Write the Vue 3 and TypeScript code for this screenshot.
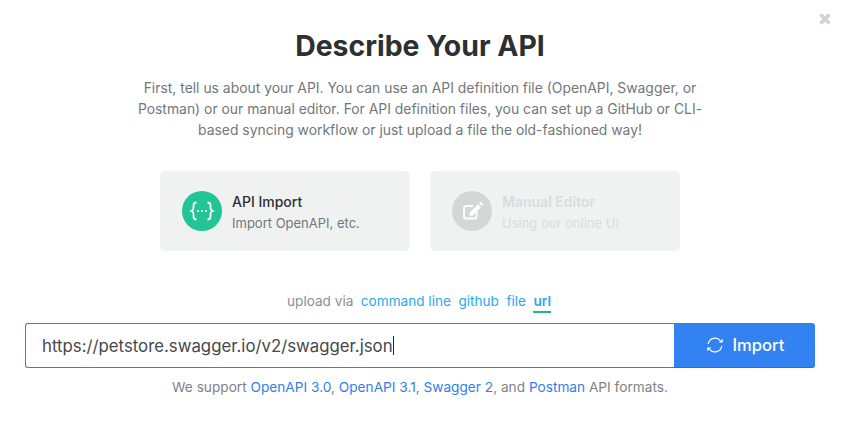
<script setup lang="ts">
const formats = [
  { text: 'OpenAPI 3.0', sep: ', ' },
  { text: 'OpenAPI 3.1', sep: ', ' },
  { text: 'Swagger 2', sep: ', and ' },
  { text: 'Postman', sep: '' },
]
</script>

<template>
  <main class="modal">
    <svg class="close" viewBox="0 0 14 14" width="14" height="14" aria-hidden="true">
      <path d="M2.5 2.5 11.5 11.5M11.5 2.5 2.5 11.5" stroke="#d0d2d3" stroke-width="3.6" fill="none" />
    </svg>
    <h1 class="title">Describe Your API</h1>
    <p class="intro">
      First, tell us about your API. You can use an API definition file (OpenAPI, Swagger, or Postman) or our manual editor. For API definition files, you can set up a GitHub or CLI-based syncing workflow or just upload a file the old-fashioned way!
    </p>
    <div class="cards">
      <div class="card">
        <span class="badge green">
          <svg viewBox="0 0 40 40" width="40" height="40" aria-hidden="true">
            <path d="M14.5 11.5c-2.2 0-3 1-3 3v2.6c0 1.6-.7 2.4-2 2.9 1.3.5 2 1.3 2 2.9v2.6c0 2 .8 3 3 3M25.5 11.5c2.2 0 3 1 3 3v2.6c0 1.6.7 2.4 2 2.9-1.3.5-2 1.3-2 2.9v2.6c0 2-.8 3-3 3" fill="none" stroke="#fff" stroke-width="1.8" />
            <circle cx="16" cy="20" r="1.1" fill="#fff" /><circle cx="20" cy="20" r="1.1" fill="#fff" /><circle cx="24" cy="20" r="1.1" fill="#fff" />
          </svg>
        </span>
        <div class="card-text">
          <strong>API Import</strong>
          <span>Import OpenAPI, etc.</span>
        </div>
      </div>
      <div class="card disabled">
        <span class="badge grey">
          <svg viewBox="0 0 40 40" width="40" height="40" aria-hidden="true">
            <path d="M24.5 20v5.5a2 2 0 0 1-2 2H14a2 2 0 0 1-2-2V17a2 2 0 0 1 2-2h7" fill="none" stroke="#fff" stroke-width="1.8" />
            <path d="M18 21.5 26 13.2l3 3-8.2 8.2-3.3.4zM27 12.2l.9-.9a1 1 0 0 1 1.4 0l1.5 1.5a1 1 0 0 1 0 1.4l-.9.9z" fill="#fff" />
          </svg>
        </span>
        <div class="card-text">
          <strong>Manual Editor</strong>
          <span>Using our online UI</span>
        </div>
      </div>
    </div>
    <nav class="tabs">
      <span class="via">upload via</span>
      <a>command line</a>
      <a>github</a>
      <a>file</a>
      <a class="active">url</a>
    </nav>
    <div class="import-row">
      <div class="url-input"><span>https://petstore.swagger.io/v2/swagger.json</span><i class="caret"></i></div>
      <button class="import-btn" type="button">
        <svg viewBox="0 0 20 20" width="20" height="20" aria-hidden="true">
          <path d="M3.2 9A6.9 6.9 0 0 1 15.4 5.7M16.8 11A6.9 6.9 0 0 1 4.6 14.3" fill="none" stroke="#fff" stroke-width="1.2" />
          <path d="M13.7 7.6h4.1V3.7zM6.3 12.4H2.200v3.900z" fill="#fff" />
        </svg>
        Import
      </button>
    </div>
    <p class="support">
      We support
      <template v-for="f in formats" :key="f.text"><a>{{ f.text }}</a>{{ f.sep }}</template>
      API formats.
    </p>
  </main>
</template>

<style>
html, body { margin: 0; background: #fff; }
</style>

<style scoped>
.modal {
  width: 841px;
  height: 436px;
  box-sizing: border-box;
  padding: 26px 1px 0 0;
  position: relative;
  overflow: hidden;
  display: flex;
  flex-direction: column;
  align-items: center;
  background: #fff;
  font-family: Inter, "Liberation Sans", sans-serif;
}
.close { position: absolute; top: 12px; right: 9px; }
.title {
  margin: 0;
  font-size: 28.4px;
  line-height: 40px;
  font-weight: 700;
  color: #2d3032;
}
.intro {
  margin: 12px 0 0;
  width: 570px;
  font-size: 13.9px;
  line-height: 21px;
  text-align: center;
  color: #72777b;
}
.cards { display: flex; gap: 20px; margin-top: 30px; }
.card {
  width: 250px;
  height: 80px;
  box-sizing: border-box;
  padding: 0 22px;
  display: flex;
  align-items: center;
  gap: 10px;
  border-radius: 5px;
  background: #f0f2f2;
}
.badge { width: 40px; height: 40px; border-radius: 50%; flex: none; display: block; }
.badge svg { display: block; }
.green { background: #22c596; }
.grey { background: #d5d6d6; }
.card-text { display: flex; flex-direction: column; gap: 3px; padding-top: 2px; font-size: 13px; line-height: 18px; color: #72777b; }
.card-text strong { font-size: 14px; font-weight: 500; color: #2d3032; }
.disabled .card-text, .disabled .card-text strong { color: #dadcdd; }
.disabled .card-text strong { font-weight: 600; }
.tabs { display: flex; gap: 7.5px; margin-top: 40px; margin-right: 2px; font-size: 13.6px; line-height: 20px; height: 22px; }
.via { color: #8b8f92; }
.tabs a { color: #2ba8f5; }
.tabs a.active { font-weight: 600; border-bottom: 2px solid #22b58f; height: 20px; }
.import-row { display: flex; width: 790px; height: 45px; margin-top: 10px; }
.url-input {
  flex: 1;
  box-sizing: border-box;
  display: flex;
  align-items: center;
  padding-left: 16px;
  border: 1px solid #2f80ed;
  border-right: 0;
  border-radius: 3px 0 0 3px;
  font-size: 16.8px;
  color: #44484b;
}
.caret { width: 1px; height: 19px; background: #222; }
.import-btn {
  width: 141px;
  height: 45px;
  border: 0;
  border-bottom: 1px solid #2a6fd0;
  border-radius: 0 3px 3px 0;
  background: #3382f2;
  color: #fff;
  font: 500 16.6px Inter, "Liberation Sans", sans-serif;
  display: flex;
  align-items: center;
  justify-content: center;
  gap: 8px;
  padding: 0;
}
.support { margin: 9px 0 0; font-size: 13.66px; line-height: 20px; color: #7d8286; }
.support a { color: #2f80ed; }
</style>
